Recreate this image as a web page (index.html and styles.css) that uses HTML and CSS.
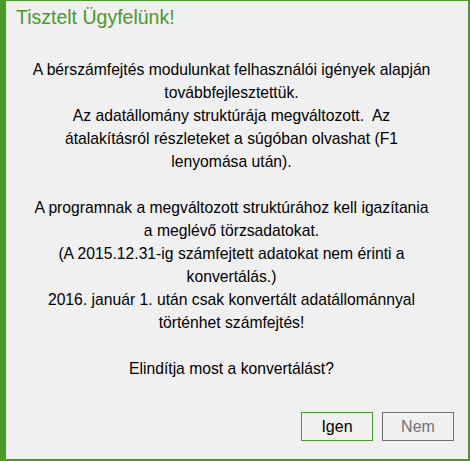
FILE: index.html
```html
<!DOCTYPE html>
<html lang="hu">
<head>
<meta charset="utf-8">
<link rel="stylesheet" href="styles.css">
</head>
<body>
<div class="dialog">
  <div class="title">Tisztelt Ügyfelünk!</div>
  <div class="message">
    <p>A bérszámfejtés modulunkat felhasználói igények alapján<br>továbbfejlesztettük.<br>Az adatállomány struktúrája megváltozott.&nbsp; Az<br>átalakításról részleteket a súgóban olvashat (F1<br>lenyomása után).</p>
    <p>A programnak a megváltozott struktúrához kell igazítania<br>a meglévő törzsadatokat.<br>(A 2015.12.31-ig számfejtett adatokat nem érinti a<br>konvertálás.)<br>2016. január 1. után csak konvertált adatállománnyal<br>történhet számfejtés!</p>
    <p>Elindítja most a konvertálást?</p>
  </div>
  <div class="buttons">
    <button class="btn btn-primary">Igen</button>
    <button class="btn btn-disabled">Nem</button>
  </div>
</div>
</body>
</html>
```
FILE: styles.css
```css
html, body {
  margin: 0;
  padding: 0;
  background: #f0f0f0;
}
.dialog {
  box-sizing: border-box;
  width: 470px;
  height: 461px;
  background: #f0f0f0;
  border-left: 6px solid #4a9a2a;
  border-top: 1px solid #4a9a2a;
  border-right: 2px solid #4a9a2a;
  border-bottom: 2px solid #4a9a2a;
  font-family: "Liberation Sans", Arial, sans-serif;
  display: flex;
  flex-direction: column;
}
.title {
  color: #4a9a2a;
  font-size: 19.5px;
  line-height: 24px;
  padding: 4px 0 0 10px;
}
.message {
  margin-top: 29px;
  text-align: center;
  font-size: 15.7px;
  line-height: 23px;
  color: #000;
  padding: 0 11px 0 0;
}
.message p {
  margin: 0 0 23px 0;
}
.buttons {
  margin-top: auto;
  display: flex;
  justify-content: flex-end;
  gap: 9px;
  padding: 0 14px 18px 0;
}
.btn {
  box-sizing: border-box;
  width: 72px;
  height: 29px;
  background: #f0f0f0;
  font-family: "Liberation Sans", Arial, sans-serif;
  font-size: 16px;
  padding: 0;
}
.btn-primary {
  border: 1px solid #4a9a2a;
  color: #000;
}
.btn-disabled {
  border: 1px solid #707070;
  color: #707070;
}
```
